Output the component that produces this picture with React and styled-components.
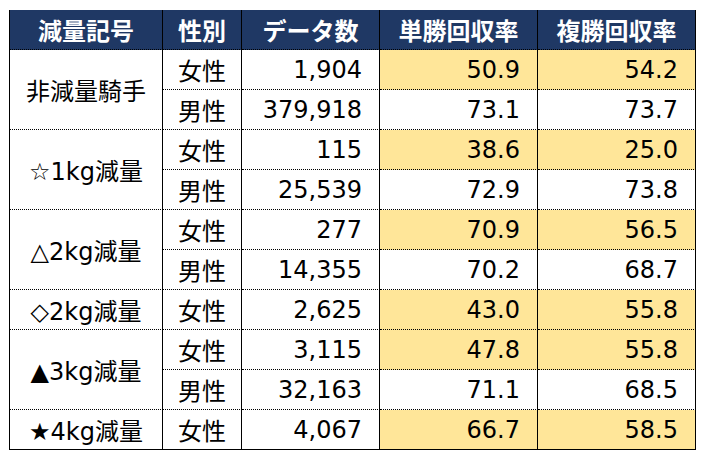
import React from "react";
import styled, { createGlobalStyle } from "styled-components";

const Global = createGlobalStyle`
  html, body { margin: 0; padding: 0; background: #ffffff; }
  body { font-family: "DejaVu Sans", "Noto Sans CJK JP", sans-serif; }
`;

const Page = styled.div`
  padding: 10px 0 0 9px;
`;

const Grid = styled.div`
  display: grid;
  grid-template-columns: 153px 79px 138px 158px 158px;
  grid-auto-rows: 40px;
  width: 687px;
  box-sizing: border-box;
  border-left: 1px solid #000;
`;

const HeadCell = styled.div`
  box-sizing: border-box;
  background: #1f3864;
  color: #ffffff;
  font-family: "Noto Sans CJK JP", sans-serif;
  font-weight: 700;
  font-size: 24px;
  display: flex;
  align-items: center;
  justify-content: center;
  border-right: 1px solid #000;
  border-bottom: 1px dotted #000;
  white-space: nowrap;
`;

const Cell = styled.div`
  box-sizing: border-box;
  background: ${(p) => (p.$hl ? "#ffe699" : "#ffffff")};
  color: #000;
  font-size: 24px;
  display: flex;
  align-items: center;
  justify-content: ${(p) => (p.$num ? "flex-end" : "center")};
  padding-right: ${(p) => (p.$num ? "17px" : "0")};
  border-right: 1px solid #000;
  border-bottom: ${(p) => (p.$last ? "1px solid #000" : "1px dotted #000")};
  white-space: nowrap;
`;

const LabelCell = styled(Cell)`
  grid-row: span ${(p) => p.$span};
`;

const groups = [
  {
    label: "非減量騎手",
    rows: [
      ["女性", "1,904", "50.9", "54.2"],
      ["男性", "379,918", "73.1", "73.7"],
    ],
  },
  {
    label: "☆1kg減量",
    rows: [
      ["女性", "115", "38.6", "25.0"],
      ["男性", "25,539", "72.9", "73.8"],
    ],
  },
  {
    label: "△2kg減量",
    rows: [
      ["女性", "277", "70.9", "56.5"],
      ["男性", "14,355", "70.2", "68.7"],
    ],
  },
  {
    label: "◇2kg減量",
    rows: [["女性", "2,625", "43.0", "55.8"]],
  },
  {
    label: "▲3kg減量",
    rows: [
      ["女性", "3,115", "47.8", "55.8"],
      ["男性", "32,163", "71.1", "68.5"],
    ],
  },
  {
    label: "★4kg減量",
    rows: [["女性", "4,067", "66.7", "58.5"]],
  },
];

const headers = ["減量記号", "性別", "データ数", "単勝回収率", "複勝回収率"];

export default function App() {
  return (
    <Page>
      <Global />
      <Grid>
        {headers.map((h) => (
          <HeadCell key={h}>{h}</HeadCell>
        ))}
        {groups.map((g, gi) => {
          const lastGroup = gi === groups.length - 1;
          return (
            <React.Fragment key={g.label}>
              <LabelCell $span={g.rows.length} $last={lastGroup}>
                {g.label}
              </LabelCell>
              {g.rows.map((r, ri) => {
                const last = lastGroup && ri === g.rows.length - 1;
                const hl = r[0] === "女性";
                return (
                  <React.Fragment key={ri}>
                    <Cell $last={last}>{r[0]}</Cell>
                    <Cell $num $last={last}>{r[1]}</Cell>
                    <Cell $num $hl={hl} $last={last}>{r[2]}</Cell>
                    <Cell $num $hl={hl} $last={last}>{r[3]}</Cell>
                  </React.Fragment>
                );
              })}
            </React.Fragment>
          );
        })}
      </Grid>
    </Page>
  );
}
